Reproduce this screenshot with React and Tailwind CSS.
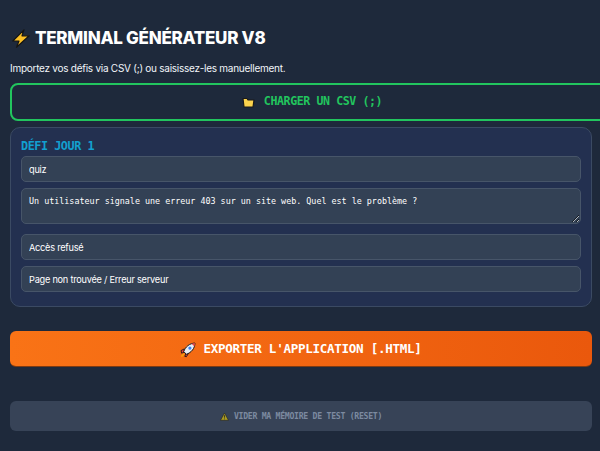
const mono = "font-['DejaVu_Sans_Mono',monospace]";

function Bolt() {
  return (
    <svg width="18" height="19" viewBox="0 0 18 19" className="shrink-0">
      <path d="M12 0.8 L0.8 12 L7 12 L4.5 18.2 L17.2 6.8 L10 6.8 Z" fill="#fbbf24" stroke="#141414" strokeWidth="1.2" strokeLinejoin="round" />
    </svg>
  );
}

function Folder() {
  return (
    <svg width="13" height="11" viewBox="0 0 13 11" className="shrink-0">
      <path d="M1 1.5 h4 l1 1.5 H12 L11 10 H2 Z" fill="#fcd34d" stroke="#1a1a1a" strokeWidth="1.2" strokeLinejoin="round" />
    </svg>
  );
}

function Rocket() {
  return (
    <svg width="16" height="16" viewBox="0 0 15 15" className="shrink-0">
      <path d="M4 6.5 L1 8 L1.5 10.5 L4 9.5 Z M8 10.5 L6 13.8 L4.5 13.5 L5.5 11 Z" fill="#ef4444" stroke="#141414" strokeWidth="0.8" />
      <path d="M3.5 9 C5 4.5 9 1.2 14 1 C14 6 10.5 10 6 11.5 Z" fill="#e8eef5" stroke="#141414" strokeWidth="0.9" />
      <path d="M10.8 1.6 L14 1 L13.5 4.2 Z" fill="#ef4444" />
      <circle cx="9.3" cy="5.7" r="1.5" fill="#3b82f6" />
      <path d="M1.2 13.8 L3.8 11.2" stroke="#f59e0b" strokeWidth="1.6" />
    </svg>
  );
}

function Warn() {
  return (
    <svg width="9" height="9" viewBox="0 0 9 9" className="shrink-0">
      <path d="M4.5 1 L8.5 8.3 H0.5 Z" fill="#a89a22" stroke="#222" strokeWidth="0.6" strokeLinejoin="round" />
      <path d="M4.5 3.2 V5.7 M4.5 6.5 V7.3" stroke="#222" strokeWidth="0.8" />
    </svg>
  );
}

const field = "block w-full h-[26px] px-[7px] rounded-[5px] border border-[#475569] bg-[#334155] text-white text-[9.2px] tracking-[-0.24px] outline-none font-['Inter',sans-serif]";

export default function App() {
  return (
    <div className="w-[600px] h-[451px] overflow-hidden bg-[#1e293b] text-white font-['Inter',sans-serif]">
      <div className="pl-[10px] pr-[8px] pt-[27px]">
        <h1 className="flex items-center gap-[5px] h-[22px] pl-[2px] text-[17px] tracking-[-0.27px] font-extrabold leading-none">
          <Bolt />
          TERMINAL GÉNÉRATEUR V8
        </h1>
        <p className="mt-[12px] h-[14px] text-[10px] tracking-[-0.26px] leading-[14px] text-[#f1f5f9]">
          Importez vos défis via CSV (;) ou saisissez-les manuellement.
        </p>
        <button className={`mt-[8px] w-[604px] h-[38px] flex items-center justify-center gap-[9px] rounded-[8px] border-2 border-[#22c55e] text-[#22c55e] text-[11.6px] tracking-[-0.41px] font-bold ${mono}`}>
          <Folder />
          CHARGER UN CSV (;)
        </button>
        <section className="mt-[6px] h-[180px] rounded-[10px] border border-[#3b4a63] bg-[#233050] px-[10px] pt-[11px]">
          <h2 className={`h-[14px] text-[11.8px] tracking-[-0.46px] leading-[14px] font-bold text-[#12a0d0] ${mono}`}>DÉFI JOUR 1</h2>
          <input readOnly value="quiz" className={`${field} mt-[3px]`} />
          <textarea
            readOnly
            value="Un utilisateur signale une erreur 403 sur un site web. Quel est le problème ?"
            className={`block w-full h-[36px] mt-[6px] px-[7px] pt-[6px] rounded-[5px] border border-[#475569] bg-[#334155] text-white text-[8.4px] leading-[12px] outline-none font-['DejaVu_Sans_Mono',monospace]`}
          />
          <input readOnly value="Accès refusé" className={`${field} mt-[10px]`} />
          <input readOnly value="Page non trouvée / Erreur serveur" className={`${field} mt-[6px]`} />
        </section>
        <button className={`mt-[24px] w-full h-[36px] pt-[2px] flex items-center justify-center gap-[7px] rounded-[6px] bg-gradient-to-r from-[#f97316] to-[#ea580c] border-b border-[#7c3a12] text-white text-[12.6px] tracking-[-0.31px] font-bold ${mono}`}>
          <Rocket />
          EXPORTER L'APPLICATION [.HTML]
        </button>
        <button className={`mt-[34px] w-full h-[30px] flex items-center justify-center gap-[5px] rounded-[6px] bg-[#374357] text-[#7c8aa0] text-[8.2px] tracking-[-0.3px] font-bold ${mono}`}>
          <Warn />
          VIDER MA MÉMOIRE DE TEST (RESET)
        </button>
      </div>
    </div>
  );
}
